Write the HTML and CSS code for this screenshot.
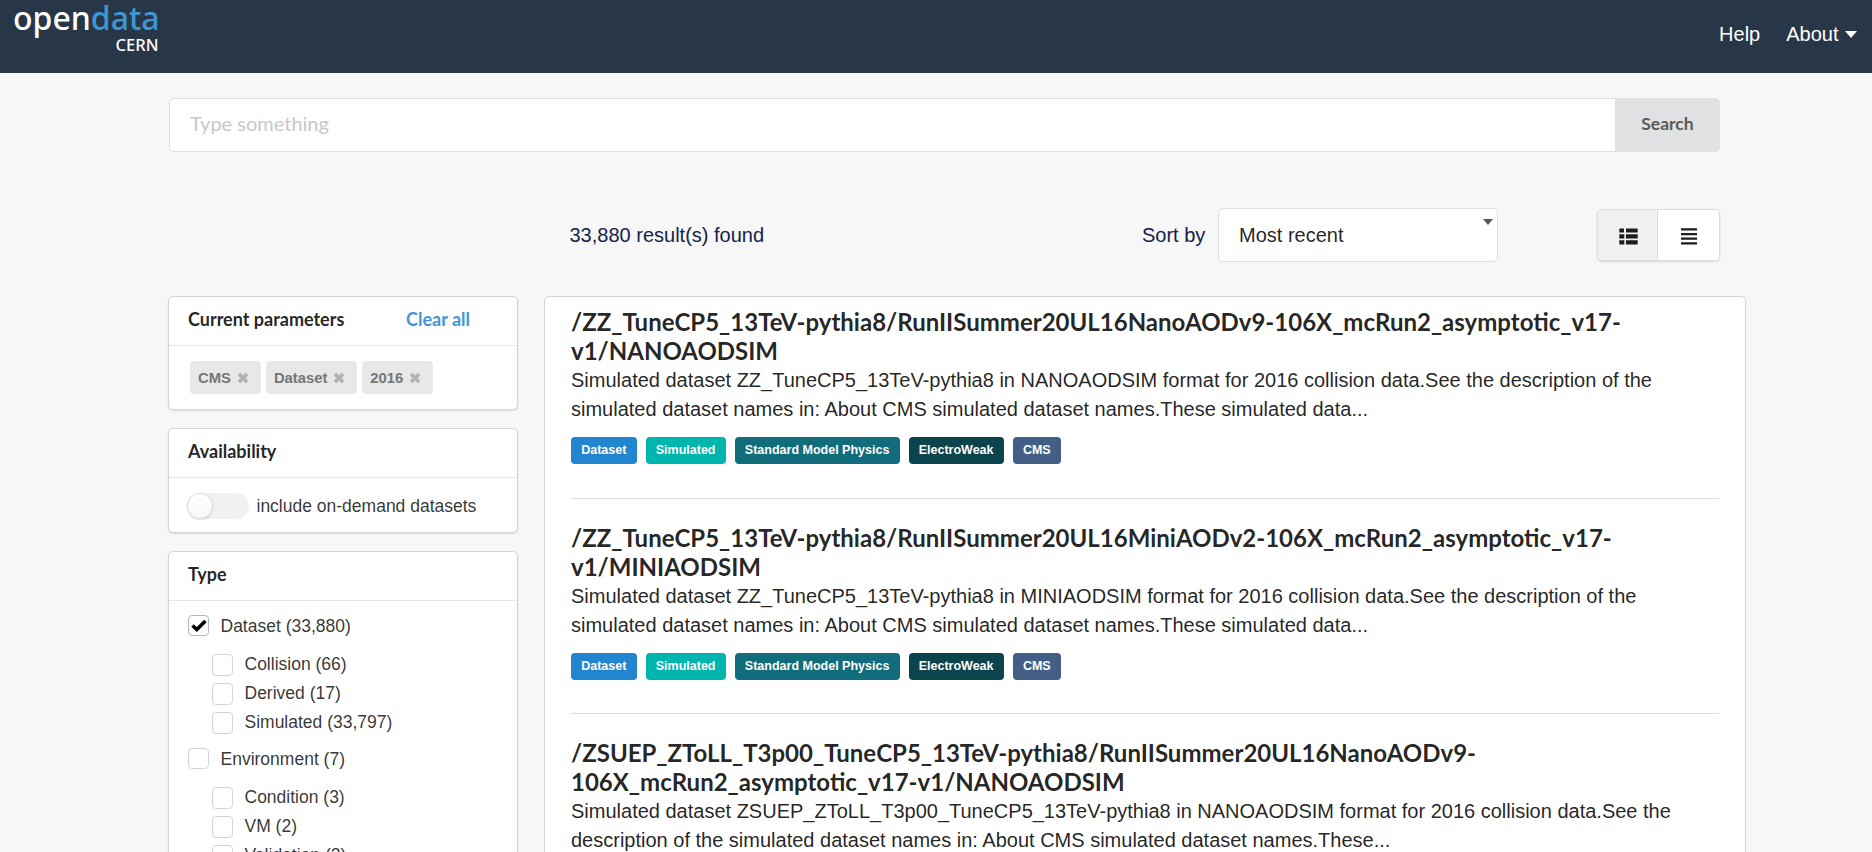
FILE: index.html
```html
<!DOCTYPE html>
<html lang="en">
<head>
<meta charset="utf-8">
<title>CERN Open Data Portal</title>
<link rel="stylesheet" href="styles.css">
</head>
<body>
<svg width="0" height="0" class="defs">
  <symbol id="cross" viewBox="0 0 12 12"><path d="M2 2 10 10M10 2 2 10" stroke="currentColor" stroke-width="3.8"/></symbol>
</svg>
<header class="topbar">
  <a class="logo"><span class="logo-main">open<b>data</b></span><span class="logo-sub">CERN</span></a>
  <nav class="nav"><a>Help</a><a>About<i class="caret"></i></a></nav>
</header>
<main class="page">
  <form class="search">
    <input class="search-input" type="text" placeholder="Type something">
    <button class="search-btn" type="button">Search</button>
  </form>
  <section class="toolbar">
    <span class="count">33,880 result(s) found</span>
    <span class="sort-label">Sort by</span>
    <div class="dropdown"><span>Most recent</span><i class="caret small"></i></div>
    <div class="views">
      <button class="view active" type="button"><svg width="19" height="17" viewBox="0 0 19 17"><path d="M1 .5h4v4H.3V1.200Q.3.500 1 .5zM7 .5h11q.7 0 .7.7v3.300H7zM.3 6.300H5.300V10.500H.3zM6.900 6.300H18.700V10.500H6.900zM.3 12.300H5.300V16.500H1q-.7 0-.7-.7zM6.900 12.300H18.700v3.500q0 .7-.7.7H6.900z" fill="#1b1c1d"/></svg></button>
      <button class="view" type="button"><svg width="16" height="17" viewBox="0 0 16 17"><path d="M0 .3h16v2.200H0zM0 5h16v2.200H0zM0 9.600h16v2.200H0zM0 14.300h16v2.200H0z" fill="#1b1c1d"/></svg></button>
    </div>
  </section>
  <div class="columns">
    <aside class="side">
      <section class="card params">
        <h2 class="card-head"><span>Current parameters</span><a class="clear">Clear all</a></h2>
        <div class="chips">
          <span class="chip">CMS<svg><use href="#cross"/></svg></span>
          <span class="chip">Dataset<svg><use href="#cross"/></svg></span>
          <span class="chip">2016<svg><use href="#cross"/></svg></span>
        </div>
      </section>
      <section class="card avail">
        <h2 class="card-head">Availability</h2>
        <label class="toggle"><span class="track"><span class="knob"></span></span>include on-demand datasets</label>
      </section>
      <section class="card type">
        <h2 class="card-head">Type</h2>
        <div class="facets">
          <div class="facet"><span class="box checked"><svg width="16" height="13" viewBox="0 0 16 13"><path d="M1.500 6.500 5.800 10.600 14.400 2" fill="none" stroke="#000" stroke-width="3.500"/></svg></span>Dataset (33,880)</div>
          <div class="children">
            <div class="facet"><span class="box"></span>Collision (66)</div>
            <div class="facet"><span class="box"></span>Derived (17)</div>
            <div class="facet"><span class="box"></span>Simulated (33,797)</div>
          </div>
          <div class="facet"><span class="box"></span>Environment (7)</div>
          <div class="children">
            <div class="facet"><span class="box"></span>Condition (3)</div>
            <div class="facet"><span class="box"></span>VM (2)</div>
            <div class="facet"><span class="box"></span>Validation (2)</div>
          </div>
        </div>
      </section>
    </aside>
    <section class="results">
      <article class="item">
        <h3>/ZZ_TuneCP5_13TeV-pythia8/RunIISummer20UL16NanoAODv9-106X_mcRun2_asymptotic_v17-<br>v1/NANOAODSIM</h3>
        <p>Simulated dataset ZZ_TuneCP5_13TeV-pythia8 in NANOAODSIM format for 2016 collision data.See the description of the<br>simulated dataset names in: About CMS simulated dataset names.These simulated data...</p>
        <div class="tags"><span class="tag dataset">Dataset</span><span class="tag simulated">Simulated</span><span class="tag physics">Standard Model Physics</span><span class="tag weak">ElectroWeak</span><span class="tag cms">CMS</span></div>
      </article>
      <article class="item">
        <h3>/ZZ_TuneCP5_13TeV-pythia8/RunIISummer20UL16MiniAODv2-106X_mcRun2_asymptotic_v17-<br>v1/MINIAODSIM</h3>
        <p>Simulated dataset ZZ_TuneCP5_13TeV-pythia8 in MINIAODSIM format for 2016 collision data.See the description of the<br>simulated dataset names in: About CMS simulated dataset names.These simulated data...</p>
        <div class="tags"><span class="tag dataset">Dataset</span><span class="tag simulated">Simulated</span><span class="tag physics">Standard Model Physics</span><span class="tag weak">ElectroWeak</span><span class="tag cms">CMS</span></div>
      </article>
      <article class="item">
        <h3>/ZSUEP_ZToLL_T3p00_TuneCP5_13TeV-pythia8/RunIISummer20UL16NanoAODv9-<br>106X_mcRun2_asymptotic_v17-v1/NANOAODSIM</h3>
        <p>Simulated dataset ZSUEP_ZToLL_T3p00_TuneCP5_13TeV-pythia8 in NANOAODSIM format for 2016 collision data.See the<br>description of the simulated dataset names in: About CMS simulated dataset names.These...</p>
      </article>
    </section>
  </div>
</main>
</body>
</html>
```
FILE: styles.css
```css
* { box-sizing: border-box; }
html, body { height: 100%; overflow: hidden; }
body {
  margin: 0;
  background: #f7f7f7;
  font-family: "Liberation Sans", Arial, sans-serif;
  font-size: 20px;
  line-height: 28.57px;
  color: rgba(0, 0, 0, .87);
}
h2, h3, p { margin: 0; }
.defs { position: absolute; }

.topbar {
  height: 73px;
  background: #273747;
  display: flex;
  justify-content: space-between;
  padding: 0 15.500px 0 13px;
  color: #fff;
}
.logo { display: flex; flex-direction: column; width: 145.500px; font-family: "Noto Sans", "Open Sans", sans-serif; font-weight: 500; }
.logo-main { font-size: 32px; line-height: 36px; }
.logo-main b { font-weight: 500; color: #3d97d5; }
.logo-sub { font-size: 16.500px; line-height: 18px; text-align: right; }
.nav { display: flex; gap: 26px; padding-top: 20px; }
.nav a { display: flex; align-items: center; height: 28px; }
.caret { border: 6.500px solid transparent; border-top: 7px solid #fff; border-bottom: 0; margin-left: 6px; }

.page { height: 779px; overflow: hidden; padding: 25px 0 0 168px; }
.search { display: flex; width: 1551px; height: 54px; margin-left: 1px; }
.search-input {
  flex: 1;
  border: 1px solid #dededf;
  border-right: 0;
  border-radius: 5px 0 0 5px;
  padding: 0 20px 4px;
  font-family: Lato, sans-serif;
  font-size: 20px;
  background: #fff;
}
.search-input::placeholder { color: #c7c7c7; }
.search-btn {
  width: 105px;
  border: 0;
  border-radius: 0 5px 5px 0;
  background: #e0e1e2;
  color: #5a5a5a;
  font: bold 17.500px Lato, sans-serif;
  padding: 0 0 3px;
}

.toolbar { display: flex; align-items: center; height: 54px; margin: 56px 0 34px; width: 1552px; color: #14234b; }
.count { width: 572.500px; margin-left: 401.500px; }
.sort-label { width: 76px; }
.dropdown {
  width: 280px;
  height: 54px;
  border: 1px solid #dededf;
  border-radius: 5px;
  background: #fff;
  color: rgba(0, 0, 0, .87);
  display: flex;
  justify-content: space-between;
  padding: 12px 4px 0 20px;
}
.caret.small { border-width: 6px 5px 0; border-top-color: #555; margin: -2px 0 0; height: 0; }
.views {
  display: flex;
  width: 123px;
  height: 52px;
  margin-left: auto;
  background: #fff;
  border: 1px solid #dcdcdd;
  border-radius: 5px;
  box-shadow: 0 1px 2px rgba(34, 36, 38, .15);
  overflow: hidden;
}
.view { flex: 1; border: 0; padding: 3px 0 0; background: #fff; display: flex; align-items: center; justify-content: center; }
.view.active { background: #f1f1f1; flex: none; width: 60px; border-right: 1px solid #dcdcdd; padding-left: 2px; }

.columns { display: flex; align-items: flex-start; gap: 26px; }
.side { width: 350px; display: flex; flex-direction: column; gap: 18px; font-size: 17.500px; line-height: 25px; }
.card {
  border: 1px solid #d4d4d5;
  border-radius: 5px;
  background: #fff;
  box-shadow: 0 1px 2px #dcdcdd;
}
.params { height: 114px; }
.avail { height: 105px; }
.type { height: 420px; }
.card-head {
  height: 49px;
  border-bottom: 1px solid #e6e6e6;
  padding: 10px 47px 0 19px;
  font: bold 18px/25px Lato, sans-serif;
  display: flex;
  justify-content: space-between;
}
.clear { color: #4095d8; }
.chips { display: flex; gap: 5px; padding: 15px 0 0 21px; }
.chip {
  display: flex;
  align-items: center;
  height: 33px;
  padding: 1px 12px 0 8px;
  border-radius: 4px;
  background: #e8e8e8;
  color: #767676;
  font-weight: bold;
  font-size: 14.800px;
}
.chip svg { width: 12px; height: 12px; margin-left: 6px; color: #b2b2b2; }
.toggle { display: flex; padding: 15px 0 0 18px; color: rgba(0, 0, 0, .8); line-height: 26px; }
.track { width: 62px; height: 26px; border-radius: 13px; background: #f1f1f1; margin-right: 7.500px; }
.knob {
  display: block;
  width: 26px;
  height: 26px;
  border-radius: 50%;
  border: 1px solid #dcdcdd;
  background: linear-gradient(#fff, #f8f8f8);
  box-shadow: 0 1px 2px rgba(34, 36, 38, .15);
}
.facets { padding: 12px 0 0 19px; color: rgba(0, 0, 0, .8); }
.facet { display: flex; height: 25px; line-height: 26px; }
.box { width: 21px; height: 21px; margin: 2px 11.500px 0 0; border: 1px solid #d4d4d5; border-radius: 4px; display: flex; align-items: center; justify-content: center; }
.box.checked { border-color: #b5b5b5; }
.children { padding: 13px 0 12px 24px; display: grid; gap: 4px; }
.children .box { height: 22px; margin-top: 3px; }

.results {
  width: 1202px;
  height: 700px;
  background: #fff;
  border: 1px solid #d4d4d5;
  border-radius: 5px;
  padding: 10px 26px;
}
.item { height: 215px; white-space: nowrap; }
.item:first-child { height: 216px; }
.item + .item { margin-top: -24px; padding-top: 24px; height: 239px; }
.item + .item::before { content: ""; display: block; height: 1px; margin: -25px 0 24px; background: #dededf; }
.item h3 { font: bold 24px/29px Lato, sans-serif; }
.item p { line-height: 29px; padding-top: 1px; }
.tags { display: flex; gap: 9px; margin-top: 13px; }
.tag { height: 27px; padding: 0 10.200px; border-radius: 4px; color: #fff; font-weight: bold; font-size: 12.500px; line-height: 26px; }
.dataset { background: #2185d0; }
.simulated { background: #00b5ad; }
.physics { background: #116d7b; }
.weak { background: #0b444c; }
.cms { background: #445f85; }
```
